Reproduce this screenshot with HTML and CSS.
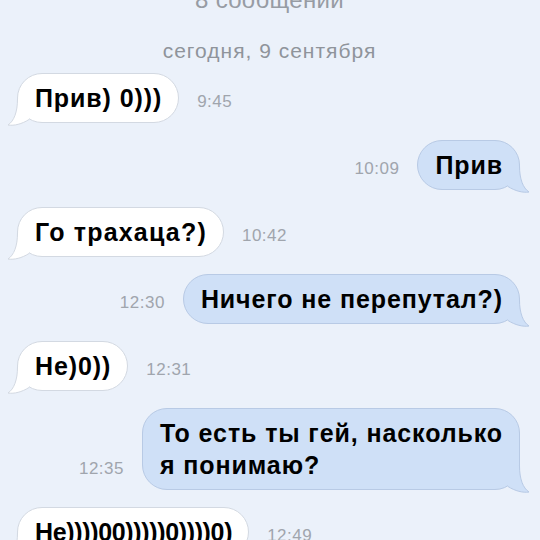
FILE: index.html
```html
<!DOCTYPE html>
<html lang="ru">
<head>
<meta charset="utf-8">
<link rel="stylesheet" href="styles.css">
</head>
<body>
<div class="chat">
  <div class="count">8 сообщений</div>
  <div class="date">сегодня, 9 сентября</div>

  <div class="row in">
    <div class="bubble">Прив) 0)))<svg class="tail" viewBox="-12 -24 26 26"><path class="tf" d="M0.5,-24 C0.5,-11 -3,-2 -9,2 C-3,3 5,1 12,-3.5 L12,-24 Z"/><path class="ts" d="M0.5,-24 C0.5,-11 -3,-2 -9,2 C-3,3 5,1 12,-3.5"/></svg></div>
    <div class="time">9:45</div>
  </div>

  <div class="row out">
    <div class="time">10:09</div>
    <div class="bubble">Прив<svg class="tail" viewBox="-12 -24 26 26"><path class="tf" d="M0.5,-24 C0.5,-11 -3,-2 -9,2 C-3,3 5,1 12,-3.5 L12,-24 Z"/><path class="ts" d="M0.5,-24 C0.5,-11 -3,-2 -9,2 C-3,3 5,1 12,-3.5"/></svg></div>
  </div>

  <div class="row in">
    <div class="bubble wide">Го трахаца?)<svg class="tail" viewBox="-12 -24 26 26"><path class="tf" d="M0.5,-24 C0.5,-11 -3,-2 -9,2 C-3,3 5,1 12,-3.5 L12,-24 Z"/><path class="ts" d="M0.5,-24 C0.5,-11 -3,-2 -9,2 C-3,3 5,1 12,-3.5"/></svg></div>
    <div class="time">10:42</div>
  </div>

  <div class="row out">
    <div class="time">12:30</div>
    <div class="bubble">Ничего не перепутал?)<svg class="tail" viewBox="-12 -24 26 26"><path class="tf" d="M0.5,-24 C0.5,-11 -3,-2 -9,2 C-3,3 5,1 12,-3.5 L12,-24 Z"/><path class="ts" d="M0.5,-24 C0.5,-11 -3,-2 -9,2 C-3,3 5,1 12,-3.5"/></svg></div>
  </div>

  <div class="row in">
    <div class="bubble">Не)0))<svg class="tail" viewBox="-12 -24 26 26"><path class="tf" d="M0.5,-24 C0.5,-11 -3,-2 -9,2 C-3,3 5,1 12,-3.5 L12,-24 Z"/><path class="ts" d="M0.5,-24 C0.5,-11 -3,-2 -9,2 C-3,3 5,1 12,-3.5"/></svg></div>
    <div class="time">12:31</div>
  </div>

  <div class="row out">
    <div class="time">12:35</div>
    <div class="bubble">То есть ты гей, насколько<br>я понимаю?<svg class="tail" viewBox="-12 -24 26 26"><path class="tf" d="M0.5,-24 C0.5,-11 -3,-2 -9,2 C-3,3 5,1 12,-3.5 L12,-24 Z"/><path class="ts" d="M0.5,-24 C0.5,-11 -3,-2 -9,2 C-3,3 5,1 12,-3.5"/></svg></div>
  </div>

  <div class="row in">
    <div class="bubble tight">Не))))00)))))0))))0)<svg class="tail" viewBox="-12 -24 26 26"><path class="tf" d="M0.5,-24 C0.5,-11 -3,-2 -9,2 C-3,3 5,1 12,-3.5 L12,-24 Z"/><path class="ts" d="M0.5,-24 C0.5,-11 -3,-2 -9,2 C-3,3 5,1 12,-3.5"/></svg></div>
    <div class="time">12:49</div>
  </div>
</div>
</body>
</html>
```

FILE: styles.css
```css
html, body {
  margin: 0;
  padding: 0;
  background: #ebf1fa;
  overflow: hidden;
  height: 540px;
}

.chat {
  font-family: "Liberation Sans", Arial, sans-serif;
  display: flex;
  flex-direction: column;
  padding: 0 18px 0 17px;
}

.count {
  margin-top: -12px;
  font-size: 24px;
  line-height: 24px;
  color: #979ca4;
  text-align: center;
  letter-spacing: 0.3px;
}

.date {
  margin-top: 27px;
  font-size: 21px;
  line-height: 24px;
  color: #8f949b;
  text-align: center;
  letter-spacing: 1px;
  margin-bottom: 10px;
}

.row {
  display: flex;
  align-items: flex-end;
  gap: 18px;
  margin-bottom: 17px;
}

.row.out {
  justify-content: flex-end;
  padding-right: 2px;
}

.bubble {
  position: relative;
  font-size: 25px;
  font-weight: bold;
  letter-spacing: 0.9px;
  line-height: 32px;
  color: #000;
  padding: 8px 16px 8px 17px;
  border-radius: 25px;
  border: 1px solid #d3d9e2;
  background: #ffffff;
  white-space: nowrap;
}

.bubble.wide {
  letter-spacing: 1.2px;
}

.bubble.tight {
  letter-spacing: -0.35px;
}

.out .bubble {
  background: #cfe0f7;
  border-color: #b8cae5;
}

.time {
  font-size: 17px;
  line-height: 20px;
  letter-spacing: 0.5px;
  color: #a0a5ad;
  margin-bottom: 11px;
}

.tail {
  position: absolute;
  bottom: -3px;
  left: -13px;
  width: 26px;
  height: 26px;
  overflow: visible;
}

.out .tail {
  left: auto;
  right: -13px;
  transform: scaleX(-1);
}

.tail .tf {
  fill: #ffffff;
  stroke: none;
}

.tail .ts {
  fill: none;
  stroke: #d3d9e2;
  stroke-width: 1;
}

.out .tail .tf {
  fill: #cfe0f7;
}

.out .tail .ts {
  stroke: #b8cae5;
}
```
